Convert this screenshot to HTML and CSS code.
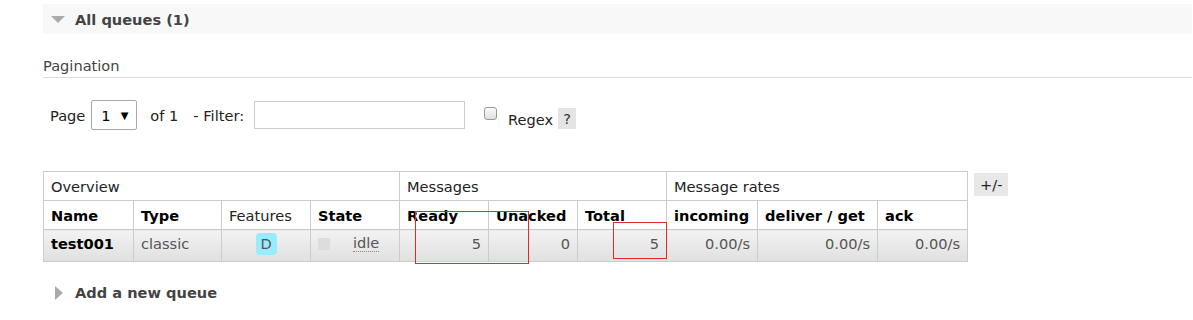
FILE: index.html
```html
<!DOCTYPE html>
<html>
<head>
<meta charset="utf-8">
<link rel="stylesheet" href="styles.css">
</head>
<body>
<div class="page">
  <div class="section-head">
    <span class="tri-down"></span>
    <h2>All queues (1)</h2>
  </div>
  <div class="pagination-title">Pagination</div>
  <div class="pager">
    <span class="lbl">Page</span>
    <span class="select"><span>1</span><span class="arrow">▼</span></span>
    <span class="lbl of">of 1</span>
    <span class="lbl filter">- Filter:</span>
    <span class="input"></span>
    <span class="checkbox"></span>
    <span class="lbl regex">Regex</span>
    <span class="help">?</span>
  </div>
  <div class="table-row">
    <div class="table-wrap">
      <table class="queues">
        <colgroup>
          <col class="w90"><col class="w88"><col class="w89"><col class="w89">
          <col class="w89"><col class="w89"><col class="w89">
          <col class="w91"><col class="w120"><col class="w90">
        </colgroup>
        <tr class="group">
          <td colspan="4">Overview</td>
          <td colspan="3">Messages</td>
          <td colspan="3">Message rates</td>
        </tr>
        <tr class="heads">
          <th>Name</th>
          <th>Type</th>
          <th class="normal">Features</th>
          <th>State</th>
          <th>Ready</th>
          <th>Unacked</th>
          <th>Total</th>
          <th>incoming</th>
          <th>deliver / get</th>
          <th>ack</th>
        </tr>
        <tr class="data">
          <td class="name">test001</td>
          <td>classic</td>
          <td class="center"><span class="badge">D</span></td>
          <td><span class="state"><span class="sq"></span><span class="idle">idle</span></span></td>
          <td class="r">5</td>
          <td class="r">0</td>
          <td class="r">5</td>
          <td class="r">0.00/s</td>
          <td class="r">0.00/s</td>
          <td class="r">0.00/s</td>
        </tr>
      </table>
      <div class="mark mark1"></div>
      <div class="mark mark2"></div>
    </div>
    <span class="plusminus">+/-</span>
  </div>
  <div class="add">
    <span class="tri-right"></span>
    <h2>Add a new queue</h2>
  </div>
</div>
</body>
</html>
```

FILE: styles.css
```css
html, body {
  margin: 0;
  padding: 0;
  background: #fff;
}
body {
  font-family: "DejaVu Sans", Verdana, sans-serif;
  font-size: 14.6px;
  color: #444;
}
.page {
  padding: 4px 1px 0 43px;
}
.section-head {
  display: flex;
  align-items: center;
  height: 30px;
  background: #f8f8f8;
}
.tri-down {
  width: 0;
  height: 0;
  margin-left: 8px;
  border-left: 7px solid transparent;
  border-right: 7px solid transparent;
  border-top: 7px solid #aaa;
}
h2 {
  margin: 0 0 0 10px;
  font-size: 14.6px;
  font-weight: bold;
  color: #444;
}
.pagination-title {
  margin-top: 23px;
  padding-bottom: 3px;
  border-bottom: 1px solid #ddd;
  color: #444;
  line-height: 17px;
}
.pager {
  display: flex;
  align-items: center;
  margin-top: 22px;
  padding-left: 7px;
  height: 30px;
  color: #222;
}
.lbl { white-space: nowrap; }
.select {
  display: flex;
  align-items: center;
  justify-content: space-between;
  box-sizing: border-box;
  width: 46px;
  height: 30px;
  margin-left: 6px;
  padding: 0 8px 0 9px;
  border: 1px solid #aaa;
  border-radius: 2px;
  color: #000;
}
.select .arrow { font-size: 10px; }
.of { margin-left: 13px; }
.filter { margin-left: 15px; }
.input {
  box-sizing: border-box;
  width: 211px;
  height: 28px;
  margin-left: 10px;
  border: 1px solid #ccc;
  background: #fff;
}
.checkbox {
  box-sizing: border-box;
  width: 13px;
  height: 13px;
  margin: 0 0 4px 19px;
  border: 1px solid #999;
  border-radius: 3px;
  background: linear-gradient(#fafafa, #e0e0e0);
}
.regex { margin: 8px 0 0 11px; }
.help {
  display: inline-flex;
  align-items: center;
  justify-content: center;
  width: 18px;
  height: 21px;
  margin: 6px 0 0 5px;
  background: #e4e4e4;
  color: #333;
}
.table-row {
  display: flex;
  align-items: flex-start;
  margin-top: 41px;
}
.table-wrap {
  position: relative;
}
.queues {
  border-collapse: collapse;
  table-layout: fixed;
  width: 925px;
  font-size: 14.6px;
}
.w88 { width: 88px; }
.w89 { width: 89px; }
.w90 { width: 90px; }
.w91 { width: 91px; }
.w120 { width: 120px; }
.queues td, .queues th {
  border: 1px solid #ccc;
  padding: 0 7px;
  text-align: left;
  white-space: nowrap;
  overflow: hidden;
}
.group td {
  height: 28px;
  color: #222;
  font-weight: normal;
}
.heads th {
  height: 28px;
  color: #000;
  font-weight: bold;
}
.heads th.normal { font-weight: normal; color: #222; }
.data td {
  height: 27px;
  padding-bottom: 4px;
  color: #555;
  background: linear-gradient(#f2f2f2, #e0e0e0);
}
.data td.name { color: #000; font-weight: bold; }
.data td.r { text-align: right; }
.data td.center { text-align: center; }
.badge {
  display: inline-block;
  width: 21px;
  height: 22px;
  line-height: 22px;
  border-radius: 4px;
  background: #99ebff;
  color: #555;
  text-align: center;
  vertical-align: middle;
}
.state {
  display: flex;
  align-items: center;
}
.sq {
  width: 12px;
  height: 12px;
  background: #ddd;
}
.idle {
  margin-left: 23px;
  border-bottom: 1px dotted #888;
  line-height: 16px;
}
.mark {
  position: absolute;
  z-index: 2;
  box-sizing: border-box;
  border: 1px solid rgb(230, 40, 40);
  background: transparent;
  pointer-events: none;
}
.mark1 { left: 372px; top: 40px; width: 114px; height: 53px; }
.mark2 { left: 570px; top: 51px; width: 54px; height: 37px; }
.plusminus {
  margin: 2px 0 0 6px;
  padding: 3px 6px;
  background: #e8e8e8;
  color: #222;
  line-height: 17px;
}
.add {
  display: flex;
  align-items: center;
  margin-top: 22px;
  padding-left: 12px;
}
.tri-right {
  width: 0;
  height: 0;
  border-top: 7px solid transparent;
  border-bottom: 7px solid transparent;
  border-left: 8px solid #aaa;
}
.add h2 { margin-left: 12px; }
```
